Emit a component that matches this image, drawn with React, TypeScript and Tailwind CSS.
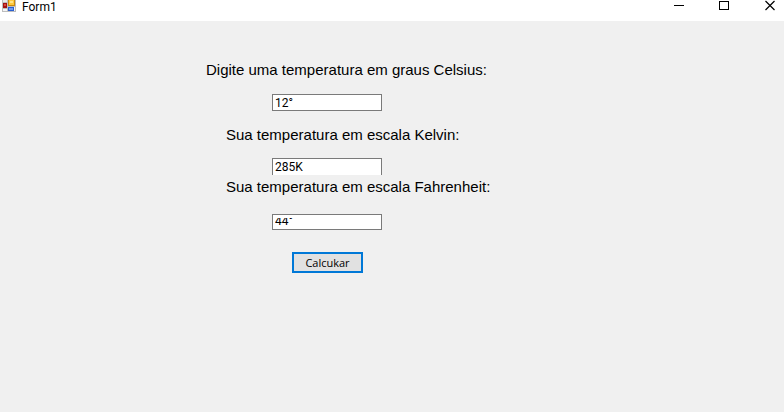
import { useState } from "react";

function FormIcon() {
  return (
    <svg width="14" height="12" viewBox="0 0 14 12" aria-hidden="true" shapeRendering="crispEdges">
      <rect width="14" height="12" fill="#bdbdbd" />
      <rect x="1" y="0" width="4" height="2" fill="#e8e8e8" />
      <rect x="1" y="3" width="4" height="5" fill="#a31212" />
      <rect x="2" y="4" width="2" height="2" fill="#d8453a" />
      <rect x="1" y="9" width="4" height="2" fill="#f4f4f4" />
      <rect x="6" y="0" width="7" height="6" fill="#c98a10" />
      <rect x="7" y="0" width="5" height="5" fill="#ffc93c" />
      <rect x="8" y="1" width="3" height="2" fill="#ffe48a" />
      <rect x="6" y="7" width="6" height="4" fill="#2a5fd0" />
      <rect x="7" y="8" width="4" height="2" fill="#6f9bf0" />
      <rect x="12" y="7" width="1" height="4" fill="#f4f4f4" />
    </svg>
  );
}

export default function App() {
  const [celsius, setCelsius] = useState("12°");
  const [kelvin, setKelvin] = useState("285K");
  const [fahrenheit, setFahrenheit] = useState("44°");

  return (
    <div className="flex min-h-screen flex-col bg-[#f0f0f0] text-black">
      <header className="flex h-[21px] items-start justify-between bg-white">
        <div className="flex items-start gap-[6px] pl-[2px]">
          <FormIcon />
          <h1 className="font-[Roboto,sans-serif] text-[12px] leading-[14px]">Form1</h1>
        </div>
        <div className="flex gap-[34px] pr-[8px]">
          <button type="button" aria-label="Minimizar" className="h-[12px] w-[12px]">
            <svg width="12" height="12" viewBox="0 0 12 12" shapeRendering="crispEdges">
              <path d="M2 5.5h10" stroke="#000" fill="none" />
            </svg>
          </button>
          <button type="button" aria-label="Maximizar" className="h-[12px] w-[12px]">
            <svg width="12" height="12" viewBox="0 0 12 12" shapeRendering="crispEdges">
              <path d="M1.5 1.5h9v8h-9z" stroke="#000" fill="none" />
            </svg>
          </button>
          <button type="button" aria-label="Fechar" className="h-[12px] w-[12px]">
            <svg width="12" height="12" viewBox="0 0 12 12">
              <path d="M1.5 1l9 9M10.5 1l-9 9" stroke="#000" strokeWidth="1.2" fill="none" />
            </svg>
          </button>
        </div>
      </header>

      <main className="flex-1">
        <form
          className="flex flex-col items-start pt-[39px] pl-[206px] font-['Liberation_Sans',Arial,sans-serif]"
          onSubmit={(event) => event.preventDefault()}
        >
          <label htmlFor="celsius" className="text-[15px] leading-[20px] whitespace-nowrap">
            Digite uma temperatura em graus Celsius:
          </label>
          <input
            id="celsius"
            value={celsius}
            onChange={(event) => setCelsius(event.target.value)}
            className="mt-[14px] ml-[66px] h-[17px] w-[110px] border border-[#7a7a7a] bg-white px-[2px] font-[Roboto,sans-serif] text-[12px] leading-[15px] outline-none"
          />

          <label htmlFor="kelvin" className="mt-[14px] ml-[20px] text-[15px] leading-[20px] whitespace-nowrap">
            Sua temperatura em escala Kelvin:
          </label>
          <input
            id="kelvin"
            value={kelvin}
            onChange={(event) => setKelvin(event.target.value)}
            className="mt-[13px] ml-[66px] h-[17px] w-[110px] border border-b-0 border-[#7a7a7a] bg-white px-[2px] font-[Roboto,sans-serif] text-[12px] leading-[15px] outline-none"
          />

          <label htmlFor="fahrenheit" className="mt-[2px] ml-[20px] text-[15px] leading-[20px] whitespace-nowrap">
            Sua temperatura em escala Fahrenheit:
          </label>
          <div className="mt-[17px] ml-[66px] h-[16px] w-[110px] border border-[#7a7a7a] bg-white px-[2px] pt-[3px]">
            <div className="flex h-[11px] items-end overflow-hidden">
              <input
                id="fahrenheit"
                value={fahrenheit}
                onChange={(event) => setFahrenheit(event.target.value)}
                className="h-[15px] w-full shrink-0 font-[Roboto,sans-serif] text-[12px] leading-[15px] outline-none"
              />
            </div>
          </div>

          <button
            type="submit"
            className="mt-[22px] ml-[86px] h-[21px] w-[71px] border-2 border-[#0078d7] bg-[#e1e1e1] text-center font-['Open_Sans',sans-serif] text-[11px] leading-[15px]"
          >
            Calcukar
          </button>
        </form>
      </main>
    </div>
  );
}
